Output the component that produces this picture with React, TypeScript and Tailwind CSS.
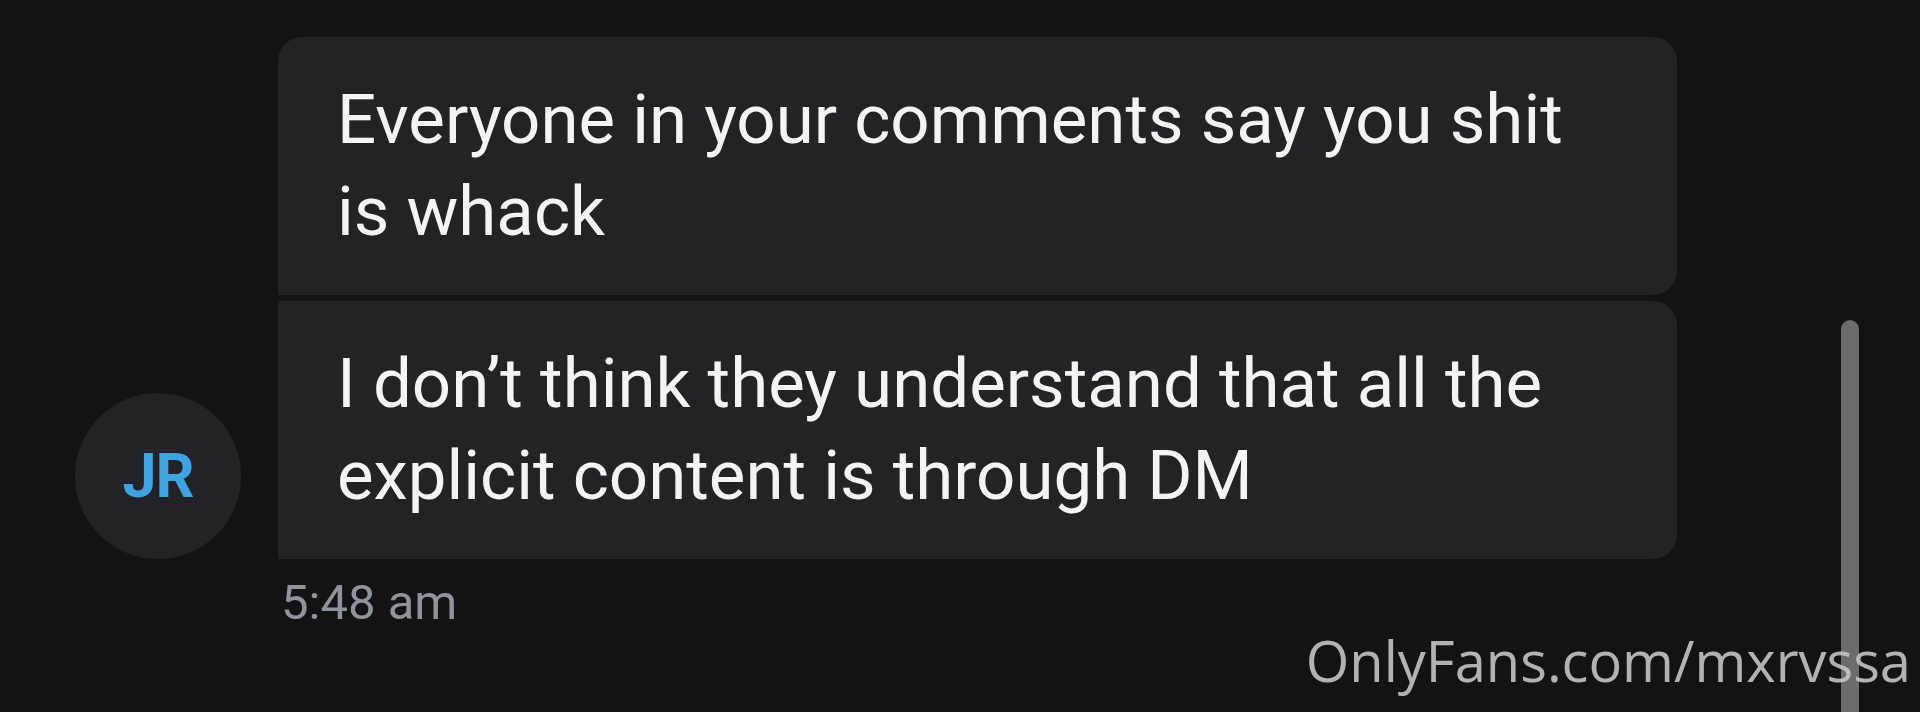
export default function App() {
  return (
    <div className="relative h-[712px] w-[1920px] overflow-hidden bg-[#131316] pt-[37px] font-['Roboto',sans-serif]">
      <div className="flex items-end gap-[37px] pl-[75px]">
        <div className="flex size-[166px] shrink-0 items-center justify-center rounded-full bg-[#222328]">
          <span className="text-[61px] font-bold leading-none tracking-[-1px] text-[#3ea3e0]">JR</span>
        </div>
        <div className="flex w-[1399px] flex-col gap-[6px]">
          <div className="rounded-tl-[24px] rounded-tr-[24px] rounded-br-[24px] bg-[#222327] px-[59px] py-[37px] text-[69px] leading-[92px] text-[#f4f4f4]">
            Everyone in your comments say you shit
            <br />
            is whack
          </div>
          <div className="rounded-tr-[24px] rounded-br-[24px] bg-[#222327] px-[59px] py-[37px] text-[69px] leading-[92px] text-[#f4f4f4]">
            I don’t think they understand that all the
            <br />
            explicit content is through DM
          </div>
        </div>
      </div>
      <div className="mt-[17px] pl-[281px] text-[49px] leading-[54px] text-[#8f939c]">5:48 am</div>

      <div className="absolute right-[61px] top-[320px] bottom-0 w-[18px] rounded-t-full bg-[#6c6c6c]" />
      <div className="absolute right-[9px] top-[626px] font-['Open_Sans',sans-serif] text-[56px] leading-[68px] text-[#c4c4c4]/90">
        OnlyFans.com/mxrvssa
      </div>
    </div>
  );
}
